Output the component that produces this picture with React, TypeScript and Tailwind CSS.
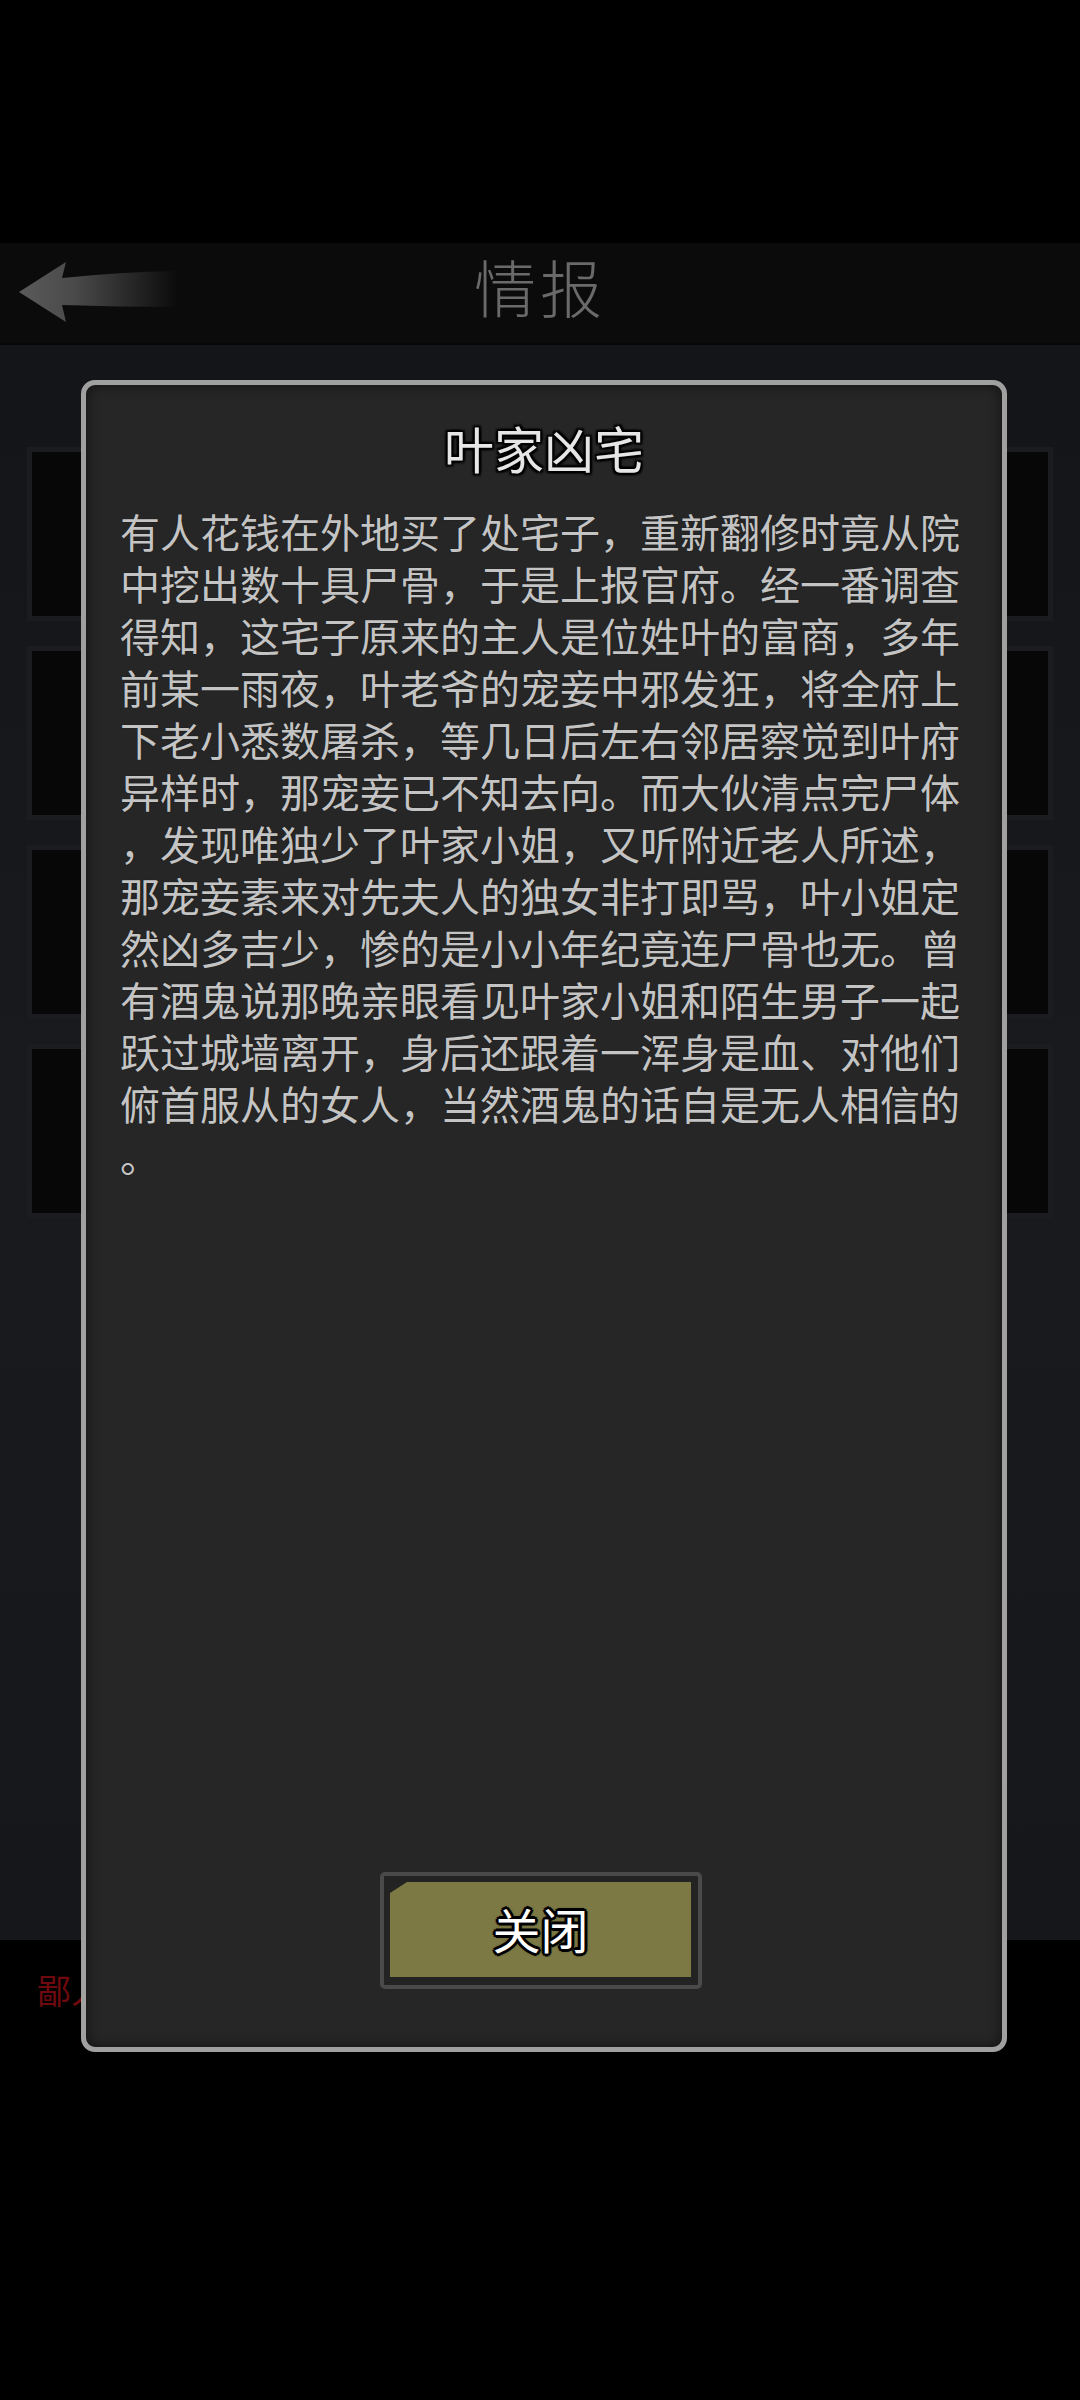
import React from "react";

const lines = [
  "有人花钱在外地买了处宅子，重新翻修时竟从院",
  "中挖出数十具尸骨，于是上报官府。经一番调查",
  "得知，这宅子原来的主人是位姓叶的富商，多年",
  "前某一雨夜，叶老爷的宠妾中邪发狂，将全府上",
  "下老小悉数屠杀，等几日后左右邻居察觉到叶府",
  "异样时，那宠妾已不知去向。而大伙清点完尸体",
  "，发现唯独少了叶家小姐，又听附近老人所述，",
  "那宠妾素来对先夫人的独女非打即骂，叶小姐定",
  "然凶多吉少，惨的是小小年纪竟连尸骨也无。曾",
  "有酒鬼说那晚亲眼看见叶家小姐和陌生男子一起",
  "跃过城墙离开，身后还跟着一浑身是血、对他们",
  "俯首服从的女人，当然酒鬼的话自是无人相信的",
  "。",
];

const cjk = "font-['Noto_Sans_CJK_SC','Noto_Sans',sans-serif]";

function BackArrow() {
  return (
    <svg width="180" height="102" viewBox="0 0 180 102" className="shrink-0">
      <defs>
        <linearGradient id="ag" x1="0" y1="0" x2="1" y2="0">
          <stop offset="0" stopColor="#5a5a5a" />
          <stop offset="0.35" stopColor="#4a4a4a" />
          <stop offset="1" stopColor="#0c0c0c" />
        </linearGradient>
      </defs>
      <path
        d="M19,49 L66,19 L62,35 Q120,29 176,28 L176,64 Q120,64 62,62 L66,79 Z"
        fill="url(#ag)"
      />
    </svg>
  );
}

export default function App() {
  return (
    <div className={`relative w-[1080px] h-[2400px] bg-black overflow-hidden ${cjk}`}>
      {/* top black */}
      <div className="h-[243px]" />
      {/* header */}
      <div className="relative h-[102px] bg-[#0b0b0b] flex items-center justify-center border-b-2 border-[#080808]">
        <div className="absolute left-0 top-0">
          <BackArrow />
        </div>
        <div className="text-[62px] leading-none font-light text-[#6a6a6a] tracking-[4px] pb-[14px]">情报</div>
      </div>
      {/* body area with cards */}
      <div className="h-[1595px] bg-[linear-gradient(180deg,#131518_0%,#181a1d_50%,#15171a_100%)] px-[27px] pt-[102px] flex flex-col gap-[25px]">
        {[0, 1, 2, 3].map((i) => (
          <div
            key={i}
            className="h-[174px] border-[5px] border-[#1b1c1f] bg-[#070707]"
          />
        ))}
      </div>
      {/* bottom black with red text */}
      <div className="pl-[37px] pt-[30px]">
        <div className="text-[34px] leading-[40px] text-[#6e0a0e]">鄙人</div>
      </div>

      {/* dialog overlay */}
      <div className="absolute left-[81px] top-[380px] w-[926px] h-[1672px] rounded-[14px] border-[5px] border-[#a0a0a0] bg-[#262626] shadow-[inset_0_0_14px_rgba(0,0,0,0.55)] flex flex-col">
        <div className="pt-[32px] text-center text-[50px] leading-[60px] text-[#e6e6e6] [text-shadow:0_0_2px_#000,0_0_3px_#000,2px_2px_2px_#000,-2px_-2px_2px_#000,2px_-2px_2px_#000,-2px_2px_2px_#000]">
          叶家凶宅
        </div>
        <div className="mt-[28px] pl-[34px] text-[40px] leading-[52px] text-[#c4c4c4] whitespace-nowrap [text-shadow:0_0_1px_#111]">
          {lines.map((l, i) => (
            <div key={i}>{l}</div>
          ))}
        </div>
        <div className="flex-1" />
        <div className="flex justify-center pb-[58px] pr-[6px]">
          <div className="w-[322px] h-[117px] rounded-[5px] border-[4px] border-[#4a4a4a] bg-[#232323] pt-[6px] pl-[6px] pr-[7px] pb-[8px]">
            <div className="relative w-full h-full bg-[#7c7944] [clip-path:polygon(17px_0,100%_0,100%_100%,0_100%,0_11px)] flex items-center justify-center">
              <span className="text-[48px] leading-none text-white pb-[4px] [text-shadow:3px_0_0_#000,-3px_0_0_#000,0_3px_0_#000,0_-3px_0_#000,2px_2px_0_#000,-2px_-2px_0_#000,2px_-2px_0_#000,-2px_2px_0_#000,0_0_4px_#000]">
                关闭
              </span>
            </div>
          </div>
        </div>
      </div>
    </div>
  );
}
